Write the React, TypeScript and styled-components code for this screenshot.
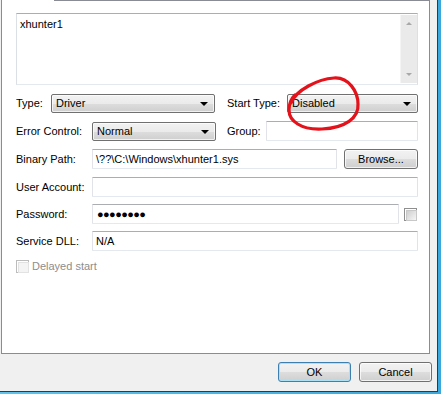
import React from 'react'
import styled, { createGlobalStyle } from 'styled-components'

const GlobalStyle = createGlobalStyle`
  html, body {
    margin: 0;
    padding: 0;
    background: #f0f0f0;
  }
  body {
    font-family: 'Liberation Sans', Arial, sans-serif;
    font-size: 11px;
    color: #000;
  }
  * {
    box-sizing: border-box;
  }
`

const Frame = styled.div`
  width: 441px;
  height: 394px;
  padding: 0 3px 2px 0;
  background: linear-gradient(90deg, #5fc3ec, #3aa8dc);
`

const Client = styled.div`
  position: relative;
  height: 100%;
  display: flex;
  flex-direction: column;
  background: #f0f0f0;
  border-right: 1px solid #2f3a44;
  border-bottom: 1px solid #2f3a44;
`

const TabPage = styled.div`
  width: 429px;
  height: 354px;
  margin-left: 1px;
  background: #fff;
  border: 1px solid #898c95;
  border-top: none;
`

const TabEdge = styled.div`
  height: 1px;
  margin-left: 52px;
  background: #898c95;
`

const Body = styled.div`
  display: flex;
  flex-direction: column;
  gap: 8px;
  padding: 12px 11px 0 14px;
`

const Memo = styled.div`
  position: relative;
  height: 72px;
  margin-bottom: 0;
  padding: 4px 3px;
  border: 1px solid #abadb3;
  border-left-color: #dbdfe6;
  border-right-color: #dbdfe6;
  border-bottom-color: #e3e9ef;
`

const ScrollBar = styled.div`
  position: absolute;
  top: 1px;
  right: 0;
  bottom: 1px;
  width: 17px;
  display: flex;
  flex-direction: column;
  justify-content: space-between;
  align-items: center;
  padding: 7px 0;
  background: #eaeaea;
  border-left: 1px solid #f4f4f4;
`

const Arrow = styled.div<{ $down?: boolean }>`
  width: 0;
  height: 0;
  border-left: 3px solid transparent;
  border-right: 3px solid transparent;
  ${(p) =>
    p.$down ? 'border-top: 3px solid #a8a8a8;' : 'border-bottom: 3px solid #a8a8a8;'}
`

const Row = styled.div<{ $h?: number; $mt?: number }>`
  display: flex;
  align-items: center;
  height: ${(p) => p.$h ?? 20}px;
  margin-top: ${(p) => p.$mt ?? 0}px;
`

const Label = styled.span<{ $w: number; $ml?: number; $muted?: boolean }>`
  flex: none;
  width: ${(p) => p.$w}px;
  margin-left: ${(p) => p.$ml ?? 0}px;
  color: ${(p) => (p.$muted ? '#8d8d8d' : '#000')};
  white-space: nowrap;
`

const Combo = styled.div<{ $w?: number }>`
  position: relative;
  ${(p) => (p.$w ? `width: ${p.$w}px; flex: none;` : 'flex: 1;')}
  height: 19px;
  padding: 0 18px 0 4px;
  display: flex;
  align-items: center;
  border: 1px solid #707070;
  border-radius: 2px;
  background: linear-gradient(#f2f2f2 0%, #ebebeb 50%, #dddddd 51%, #cfcfcf 100%);
  box-shadow: inset 0 0 0 1px rgba(255, 255, 255, 0.7);

  &::after {
    content: '';
    position: absolute;
    right: 6px;
    top: 7px;
    border-left: 4px solid transparent;
    border-right: 4px solid transparent;
    border-top: 4px solid #000;
  }
`

const Field = styled.div<{ $w?: number }>`
  ${(p) => (p.$w ? `width: ${p.$w}px; flex: none;` : 'flex: 1;')}
  height: 20px;
  padding: 0 3px;
  display: flex;
  align-items: center;
  background: #fff;
  border: 1px solid #abadb3;
  border-left-color: #e2e3ea;
  border-right-color: #e2e3ea;
  border-bottom-color: #e3e9ef;
  border-radius: 1px;
`

const Dots = styled.span`
  font-size: 11px;
  letter-spacing: -0.6px;
  padding-left: 1px;
`

const Check = styled.div<{ $disabled?: boolean; $ml?: number }>`
  flex: none;
  width: 13px;
  height: 13px;
  margin-left: ${(p) => p.$ml ?? 0}px;
  border: 1px solid ${(p) => (p.$disabled ? '#bcbcbc' : '#8f8f8f')};
  padding: 1px;

  &::before {
    content: '';
    display: block;
    width: 100%;
    height: 100%;
    border: 1px solid ${(p) => (p.$disabled ? '#e2e2e2' : '#c8c8c8')};
    background: ${(p) =>
      p.$disabled
        ? '#f4f4f4'
        : 'linear-gradient(135deg, #cfcfcf, #f6f6f6)'};
  }
`

const Button = styled.div<{ $w?: number; $ml?: number; $default?: boolean }>`
  ${(p) => (p.$w ? `width: ${p.$w}px; flex: none;` : 'flex: 1;')}
  margin-left: ${(p) => p.$ml ?? 0}px;
  height: 20px;
  display: flex;
  align-items: center;
  justify-content: center;
  border: 1px solid ${(p) => (p.$default ? '#3c7fb1' : '#707070')};
  border-radius: 3px;
  background: linear-gradient(#f2f2f2 0%, #ebebeb 50%, #dddddd 51%, #cfcfcf 100%);
  box-shadow: inset 0 0 0 1px ${(p) => (p.$default ? '#a8e2f8' : 'rgba(255,255,255,0.75)')};
`

const Footer = styled.div`
  display: flex;
  justify-content: flex-end;
  gap: 8px;
  padding: 8px 5px 0 0;
`

const Annotation = styled.svg`
  position: absolute;
  left: 0;
  top: 0;
  pointer-events: none;
`

export default function App() {
  return (
    <>
      <GlobalStyle />
      <Frame>
        <Client>
          <TabPage>
            <TabEdge />
            <Body>
              <Memo>
                xhunter1
                <ScrollBar>
                  <Arrow />
                  <Arrow $down />
                </ScrollBar>
              </Memo>

              <Row>
                <Label $w={35}>Type:</Label>
                <Combo $w={164}>Driver</Combo>
                <Label $w={60} $ml={12}>
                  Start Type:
                </Label>
                <Combo>Disabled</Combo>
              </Row>

              <Row>
                <Label $w={76}>Error Control:</Label>
                <Combo $w={124}>Normal</Combo>
                <Label $w={39} $ml={11}>
                  Group:
                </Label>
                <Field />
              </Row>

              <Row>
                <Label $w={76}>Binary Path:</Label>
                <Field $w={245}>\??\C:\Windows\xhunter1.sys</Field>
                <Button $ml={7}>Browse...</Button>
              </Row>

              <Row>
                <Label $w={76}>User Account:</Label>
                <Field />
              </Row>

              <Row $mt={-1}>
                <Label $w={76}>Password:</Label>
                <Field $w={307}>
                  <Dots>●●●●●●●●</Dots>
                </Field>
                <Check $ml={5} />
              </Row>

              <Row $mt={-1}>
                <Label $w={76}>Service DLL:</Label>
                <Field>N/A</Field>
              </Row>

              <Row $h={16} $mt={-1}>
                <Check $disabled />
                <Label $w={80} $ml={3} $muted>
                  Delayed start
                </Label>
              </Row>
            </Body>
          </TabPage>

          <Footer>
            <Button $w={73} $default>
              OK
            </Button>
            <Button $w={73}>Cancel</Button>
          </Footer>

          <Annotation width="438" height="392" viewBox="0 0 438 392">
            <path
              d="M291 103 C296 90 318 79 334 78 C349 77 358 92 358 104 C359 118 345 128 322 129 C301 130 289 121 289 110 C289 104 291 99 295 95"
              fill="none"
              stroke="#e3121b"
              strokeWidth="3.2"
              strokeLinecap="round"
            />
          </Annotation>
        </Client>
      </Frame>
    </>
  )
}
